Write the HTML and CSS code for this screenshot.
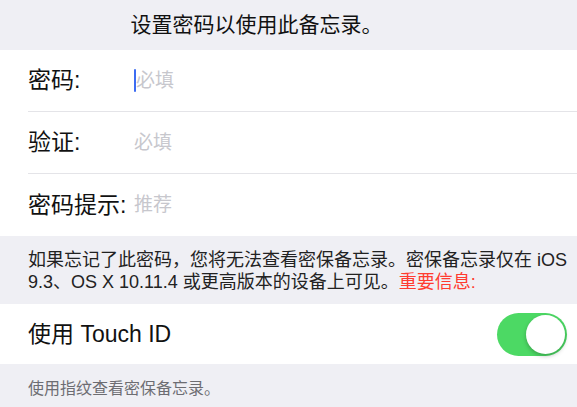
FILE: index.html
```html
<!DOCTYPE html>
<html lang="zh-CN">
<head>
    <meta charset="UTF-8">
    <meta name="viewport" content="width=device-width, initial-scale=1.0">
    <title>设置密码</title>
    <link rel="stylesheet" href="styles.css">
</head>
<body>
    <div class="title">设置密码以使用此备忘录。</div>

    <div class="group">
        <div class="row">
            <label class="label">密码:</label>
            <div class="field">
                <span class="caret"></span>
                <input type="password" placeholder="必填">
            </div>
        </div>
        <div class="row">
            <label class="label">验证:</label>
            <div class="field">
                <input type="password" placeholder="必填">
            </div>
        </div>
        <div class="row last">
            <label class="label">密码提示:</label>
            <div class="field">
                <input type="text" placeholder="推荐">
            </div>
        </div>
    </div>

    <div class="note">
        <div>如果忘记了此密码，您将无法查看密保备忘录。密保备忘录仅在 iOS</div>
        <div>9.3、OS X 10.11.4 或更高版本的设备上可见。<span class="red">重要信息:</span></div>
    </div>

    <div class="group">
        <div class="row last touch">
            <span class="label wide">使用 Touch ID</span>
            <span class="switch on"><span class="knob"></span></span>
        </div>
    </div>

    <div class="note small">使用指纹查看密保备忘录。</div>
</body>
</html>
```

FILE: styles.css
```css
body {
    margin: 0;
    background: #efeff4;
    font-family: "Liberation Sans", "Noto Sans CJK SC", sans-serif;
    color: #111;
}

.title {
    height: 50px;
    display: flex;
    align-items: center;
    justify-content: center;
    padding-right: 64px;
    padding-bottom: 4px;
    box-sizing: border-box;
    font-size: 21px;
}

.group {
    background: #fff;
}

.row {
    display: flex;
    align-items: center;
    height: 61px;
    margin-left: 28px;
    border-bottom: 1px solid #e4e4e8;
}

.row.last {
    border-bottom: none;
    height: 62px;
}

.row.touch {
    height: 60px;
    justify-content: space-between;
    padding-right: 10px;
}

.label {
    width: 106px;
    font-size: 23px;
    line-height: 1;
    white-space: nowrap;
}

.label.wide {
    width: auto;
}

.field {
    display: flex;
    align-items: center;
    flex: 1;
}

.caret {
    width: 2px;
    height: 23px;
    background: #3d6cf2;
    border-radius: 1px;
}

.field input {
    border: none;
    outline: none;
    padding: 0;
    margin: 0;
    width: 200px;
    font-family: inherit;
    font-size: 19px;
    background: transparent;
}

.field input::placeholder {
    color: #c7c7cd;
}

.note {
    padding: 13px 10px 11px 28px;
    font-size: 18px;
    line-height: 22px;
    color: #222;
    white-space: nowrap;
}

.note.small {
    padding-top: 14px;
    font-size: 16px;
    color: #6d6d72;
}

.red {
    color: #ff3b30;
}

.switch {
    width: 70px;
    height: 43px;
    border-radius: 22px;
    background: #4cd964;
    display: flex;
    align-items: center;
    justify-content: flex-end;
    padding: 2px;
    box-sizing: border-box;
}

.knob {
    width: 39px;
    height: 39px;
    border-radius: 50%;
    background: #fff;
    box-shadow: 0 2px 4px rgba(0, 0, 0, 0.25);
}
```
